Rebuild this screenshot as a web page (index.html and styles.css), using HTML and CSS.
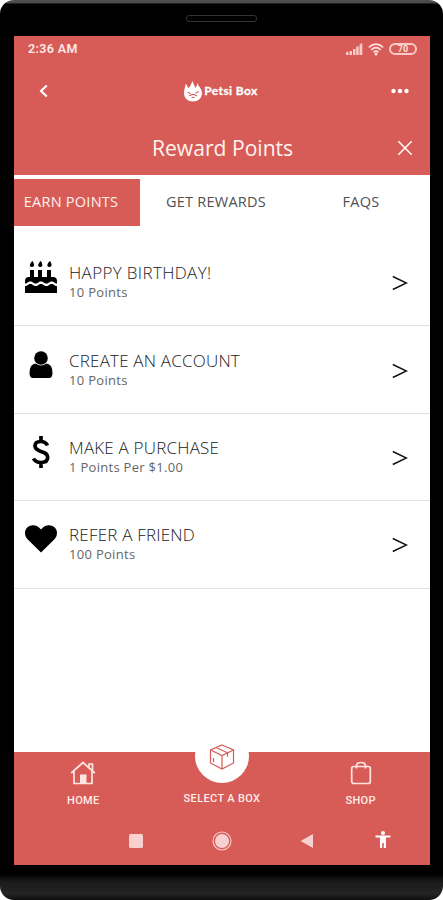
FILE: index.html
```html
<!DOCTYPE html>
<html lang="en">
<head>
<meta charset="utf-8">
<title>Reward Points</title>
<link rel="stylesheet" href="styles.css">
</head>
<body>
<div class="phone">
  <div class="speaker"></div>
  <div class="screen">
    <header class="header">
      <div class="status">
        <span class="time">2:36 AM</span>
        <svg class="signal" width="17" height="12" viewBox="0 0 17 12"><path d="M0 9h2.500v3H0zM3.500 8H6v4H3.500zM7 6h2.500v6H7zM10.200 3.500h2.500V12h-2.500zM13.500 1.500 16.300 0v12h-2.800z"/></svg>
        <svg class="wifi" width="16" height="13" viewBox="0 0 16 13"><path d="M.9 4.300Q8-2 15.100 4.300M3.200 6.800Q8 2.600 12.800 6.800M5.500 9.200Q8 7 10.500 9.200"/><circle cx="8" cy="11" r="1.500"/></svg>
        <span class="battery">70</span>
      </div>
      <div class="appbar">
        <svg class="back" width="10" height="14" viewBox="0 0 10 14"><path d="M7.800 1.500 2 7l5.800 5.500"/></svg>
        <div class="brand">
          <svg width="20" height="22" viewBox="0 0 20 22"><path class="flame" d="M10 1c0 4 2 4 2 7 2-1 1.600-3 2.300-5C15 6 19 8.500 19 13c0 5-4 8.500-9 8.500S1 18 1 13c0-4 1.500-6 1.500-9 1.700 1 2 2.500 2.700 4C8 7 7.500 3.500 10 1z"/><path class="face" d="M4.500 12.200l3 1.200M15.500 11.500l-3 1.900M6 16l3-1.500h2l3 1.500M8.500 17.500h3"/></svg>
          <span>Petsi Box</span>
        </div>
        <svg class="more" width="18" height="6" viewBox="0 0 18 6"><circle cx="2.500" cy="3" r="2.200"/><circle cx="9" cy="3" r="2.200"/><circle cx="15.500" cy="3" r="2.200"/></svg>
      </div>
      <div class="titlebar">
        <h1>Reward Points</h1>
        <svg class="close" width="16" height="16" viewBox="0 0 16 16"><path d="M1.300 1.300l13.400 13.400M14.700 1.300 1.300 14.700"/></svg>
      </div>
    </header>
    <nav class="tabs">
      <span class="tab active">EARN POINTS</span>
      <span class="tab rewards">GET REWARDS</span>
      <span class="tab faqs">FAQS</span>
    </nav>
    <main class="list">
      <div class="row">
        <svg class="icon" width="32" height="32" viewBox="0 0 32 32"><path d="M5 9h4v7h4V9h4v7h5V9h4v7h2q4 0 4 4v2.500c-3 0-2.500-2-5.300-2s-2.500 2-5.300 2-2.600-2-5.400-2-2.500 2-5.300 2-2.500-2-5.300-2S3 22.500 0 22.500V20q0-4 4-4h1z"/><path d="M0 25c3.200 0 2.600-2 5.400-2s2.500 2 5.300 2 2.500-2 5.300-2 2.600 2 5.400 2 2.500-2 5.300-2 2.300 2 5.300 2v7H0z"/><path d="M7.500 0c2 3 2.300 6-.5 6S4 3 7.500 0zM15.800 0c2 3 2.300 6-.5 6s-3-3 .5-6zM25 0c2 3 2.300 6-.5 6s-3-3 .5-6z"/></svg>
        <div class="copy"><h2 class="birthday">HAPPY BIRTHDAY!</h2><p>10 Points</p></div>
        <svg class="arrow" width="16" height="16" viewBox="0 0 16 16"><path d="M.8 1.500 14.500 8 .8 14.500"/></svg>
      </div>
      <div class="row">
        <svg class="icon" width="32" height="32" viewBox="0 0 32 32"><circle cx="16" cy="9" r="6.800"/><path d="M10.500 14.500q5.500 4 11 0 6 .8 6 9.500 0 5-3.500 5H8q-3.500 0-3.500-5 0-8.700 6-9.500z"/></svg>
        <div class="copy"><h2>CREATE AN ACCOUNT</h2><p>10 Points</p></div>
        <svg class="arrow" width="16" height="16" viewBox="0 0 16 16"><path d="M.8 1.500 14.500 8 .8 14.500"/></svg>
      </div>
      <div class="row">
        <svg class="icon" width="32" height="32" viewBox="0 0 32 32"><path class="dollar" d="M16 0v5M16 26v6M22.500 9.500Q20.500 5.500 15.800 5.500 10 5.500 10 9.800c0 4 3.500 4.700 6.200 5.700 3.300 1.100 6.500 2 6.500 5.800 0 4.300-3.200 5.200-6.700 5.200q-5.500 0-7.500-4"/></svg>
        <div class="copy"><h2>MAKE A PURCHASE</h2><p class="per">1 Points Per $1.00</p></div>
        <svg class="arrow" width="16" height="16" viewBox="0 0 16 16"><path d="M.8 1.500 14.500 8 .8 14.500"/></svg>
      </div>
      <div class="row">
        <svg class="icon" width="32" height="32" viewBox="0 0 32 32"><path d="M16 29.500 2.800 16.500C-1 12.500-.7 7 2.500 4.200 6.200 1 12.500 1.500 16 6.500c3.500-5 9.800-5.500 13.500-2.300 3.200 2.800 3.500 8.300-.3 12.300z"/></svg>
        <div class="copy"><h2>REFER A FRIEND</h2><p>100 Points</p></div>
        <svg class="arrow" width="16" height="16" viewBox="0 0 16 16"><path d="M.8 1.500 14.500 8 .8 14.500"/></svg>
      </div>
    </main>
    <footer class="footer">
      <nav class="bottom-nav">
        <div class="item">
          <svg width="26" height="24" viewBox="0 0 26 24"><path class="line" d="M1.200 12 13 1.500 24.800 12M4 10.500V22.500h18V10.500M19 6V3h3.500v6"/><path class="door" d="M10 13.500h6.500v9H10z"/></svg>
          <span>HOME</span>
        </div>
        <div class="item select">
          <div class="bubble"><svg width="26" height="26" viewBox="0 0 26 26"><path d="M13 1 24.500 6v13L13 25 1.500 19V6zM1.500 6 13 11.500 24.500 6M13 11.500V25M7 3.500l11.500 5.300v4M4.500 14v4"/></svg></div>
          <span>SELECT A BOX</span>
        </div>
        <div class="item">
          <svg width="22" height="24" viewBox="0 0 22 24"><rect class="line" x="1.700" y="5.500" width="18.600" height="17" rx="2"/><path class="line" d="M6.500 7.500V5q0-3.500 4.500-3.500T15.500 5v2.500"/></svg>
          <span>SHOP</span>
        </div>
      </nav>
      <div class="system">
        <svg width="14" height="14" viewBox="0 0 14 14"><rect width="14" height="14" rx="1.500"/></svg>
        <svg class="home-key" width="20" height="20" viewBox="0 0 20 20"><circle cx="10" cy="10" r="7"/><circle class="ring" cx="10" cy="10" r="9"/></svg>
        <svg class="back-key" width="14" height="14" viewBox="0 0 14 14"><path d="M.5 7 13 0v14z"/></svg>
        <svg class="person" width="16" height="17" viewBox="0 0 16 17"><circle cx="8" cy="2" r="2"/><path d="M.5 4.500h15v2H11V17H8.800v-5H7.200v5H5V6.500H.5z"/></svg>
      </div>
    </footer>
  </div>
</div>
</body>
</html>
```
FILE: styles.css
```css
* { box-sizing: border-box; }
body { margin: 0; background: #fff; font-family: "Open Sans", sans-serif; }
svg { display: block; flex: none; }
h1, h2, p { margin: 0; font-weight: 400; white-space: nowrap; }

.phone {
  position: relative;
  width: 443px;
  height: 900px;
  padding: 36px 13px 35px 14px;
  border-radius: 14px;
  background: linear-gradient(#505050 0, #484848 3px, #000 4px, #000 874px, #1b1b1b 882px, #242424 894px, #111 899px);
}
.speaker {
  position: absolute;
  top: 15px;
  left: 186px;
  width: 71px;
  height: 7px;
  border: 1px solid #333;
  border-radius: 3px;
}
.screen { display: flex; flex-direction: column; height: 829px; background: #fff; }

.header { height: 139px; background: #d75b57; color: #fff; }
.status { display: flex; align-items: center; height: 26px; padding: 0 13px 0 14px; }
.time { margin-right: auto; font: 600 12.5px/26px Roboto, sans-serif; letter-spacing: .35px; color: #ffe9e5; }
.signal { margin-right: 5px; fill: #f9cbc7; }
.wifi { margin-right: 5px; fill: #ffe2df; }
.wifi path { fill: none; stroke: #ffe2df; stroke-width: 1.6; }
.battery {
  width: 28px;
  height: 12px;
  border: 2px solid #f9cbc7;
  border-radius: 6px;
  font: 700 9px/9px Roboto, sans-serif;
  text-align: center;
  color: #ffe2df;
}
.appbar { display: flex; align-items: center; justify-content: space-between; height: 58px; padding: 0 21px 0 25px; }
.back { fill: none; stroke: #fff; stroke-width: 2.1; }
.brand { display: flex; align-items: center; gap: 1px; margin-left: 1px; font: 700 12px/22px Lato, sans-serif; letter-spacing: .4px; white-space: nowrap; -webkit-text-stroke: .3px #fff; }
.flame { fill: #fff; }
.face { fill: none; stroke: #d75b57; stroke-width: 1.1; }
.more { fill: #fff; }
.titlebar { display: flex; align-items: center; justify-content: space-between; height: 55px; padding: 0 17px 0 138px; }
.titlebar h1 { font-size: 21.1px; line-height: 55px; color: #fff3ef; }
.close { fill: none; stroke: #fff; stroke-width: 1.5; }

.tabs { display: flex; height: 47px; margin-top: 4px; font-size: 14.5px; line-height: 46px; letter-spacing: .25px; color: #505050; }
.tab { white-space: nowrap; text-align: center; }
.active { width: 126px; padding-right: 12px; background: #d75b57; color: #fff3ef; }
.rewards { width: 152px; }
.faqs { width: 138px; }

.list { margin-top: 13px; }
.row { display: flex; align-items: center; height: 87.4px; padding: 0 22px 0 11px; border-bottom: 1px solid #e2e2e2; }
.icon { margin-top: -10px; fill: #000; }
.dollar { fill: none; stroke: #000; stroke-width: 3.7; }
.copy { margin: 0 auto 0 12px; }
.row h2 { font-weight: 300; font-size: 17px; line-height: 21px; letter-spacing: .2px; color: #222; }
.row .birthday { letter-spacing: .35px; }
.row p { font-size: 13px; line-height: 19px; letter-spacing: .3px; color: #666; }
.arrow { margin-top: 2px; fill: none; stroke: #111; stroke-width: 1.5; }

.footer { height: 113px; margin-top: auto; background: #d75b57; color: #ffece9; }
.bottom-nav { display: grid; grid-template-columns: repeat(3, 1fr); height: 68px; }
.item { display: flex; flex-direction: column; align-items: center; padding-top: 9px; }
.item span { margin-top: 8px; font: 500 11px/15px Roboto, sans-serif; letter-spacing: .35px; white-space: nowrap; }
.line { fill: none; stroke: #ffe5e2; stroke-width: 1.7; }
.door { fill: #ffe5e2; }
.select { padding: 0; }
.bubble { display: flex; justify-content: center; width: 54px; height: 54px; margin-top: -23px; padding-top: 15px; border-radius: 50%; background: #fff; }
.bubble svg { fill: none; stroke: #d75b57; stroke-width: 1.2; }
.item.select span { margin-top: 8px; }
.system { display: flex; align-items: center; height: 41px; padding-left: 115px; fill: #f8d0d0; }
.home-key { margin-left: 69px; }
.back-key { margin-left: 68px; }
.ring { fill: none; stroke: #f8d0d0; stroke-width: 1.1; }
.person { margin-left: 61px; margin-top: -2px; fill: #fff; }
```
